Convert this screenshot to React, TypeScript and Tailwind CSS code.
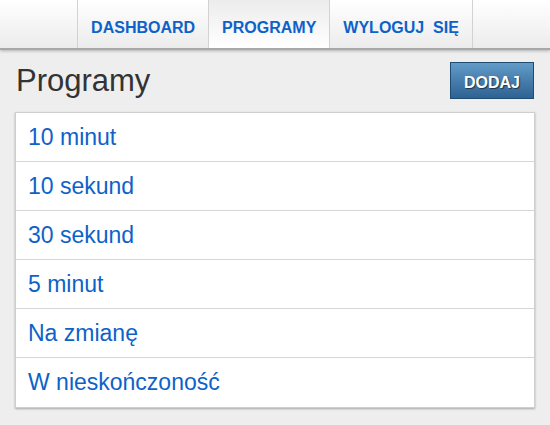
import React from "react";

const items = ["10 minut", "10 sekund", "30 sekund", "5 minut", "Na zmianę", "W nieskończoność"];

export default function App() {
  return (
    <div className="min-h-screen bg-[#eeeeee]" style={{ fontFamily: '"Liberation Sans", Arial, sans-serif' }}>
      <nav className="h-[50px] border-b-2 border-[#a8a8a8] bg-gradient-to-b from-white to-[#ececec] shadow-[0_1px_3px_rgba(0,0,0,0.25)] flex justify-center">
        <div className="flex border-l border-[#d2d2d2] h-[48px]">
          <a className="h-[48px] px-[13px] pt-[19px] border-r border-[#d2d2d2] text-[16px] leading-[18px] font-bold text-[#0d62c9]">DASHBOARD</a>
          <a className="h-[48px] px-[13px] pt-[19px] border-r border-[#d2d2d2] text-[16px] leading-[18px] font-bold text-[#0d62c9] bg-gradient-to-b from-[#ececec] to-white">PROGRAMY</a>
          <a className="h-[48px] px-[13px] pt-[19px] border-r border-[#d2d2d2] text-[16px] leading-[18px] font-bold text-[#0d62c9] whitespace-pre">WYLOGUJ  SIĘ</a>
        </div>
      </nav>
      <div className="px-[15px]">
        <div className="flex justify-between items-start pt-[12px] h-[62px]">
          <h1 className="text-[31px] leading-[34px] text-[#333333] mt-[2px] pl-[1px]">Programy</h1>
          <button className="w-[84px] h-[37px] mr-[1px] flex items-center justify-center pt-[5px] border border-[#1f4c72] bg-gradient-to-b from-[#629bc8] to-[#2e6292] text-white font-bold text-[16px] leading-[18px] [text-shadow:1px_1px_1px_rgba(0,0,0,0.55)]">
            DODAJ
          </button>
        </div>
        <div className="bg-white border border-[#cfcfcf] shadow-[0_1px_2px_rgba(0,0,0,0.3)]">
          {items.map((t, i) => (
            <div
              key={t}
              className={`h-[49px] flex items-center pl-[12px] text-[23px] text-[#0d62c9] ${i < items.length - 1 ? "border-b border-[#d6d6d6]" : "h-[48px]"}`}
            >
              {t}
            </div>
          ))}
        </div>
      </div>
    </div>
  );
}
